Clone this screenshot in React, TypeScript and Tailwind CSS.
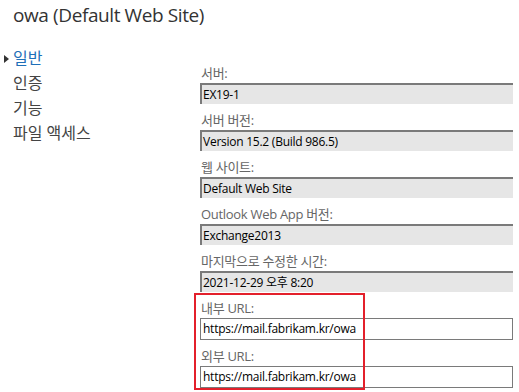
const font = "font-['Segoe_UI','Open_Sans','Noto_Sans_CJK_KR',sans-serif]"

interface Field {
  label: string
  value: string
  editable?: boolean
}

const fields: Field[] = [
  { label: '서버:', value: 'EX19-1' },
  { label: '서버 버전:', value: 'Version 15.2 (Build 986.5)' },
  { label: '웹 사이트:', value: 'Default Web Site' },
  { label: 'Outlook Web App 버전:', value: 'Exchange2013' },
  { label: '마지막으로 수정한 시간:', value: '2021-12-29 오후 8:20' },
]

const urlFields: Field[] = [
  { label: '내부 URL:', value: 'https://mail.fabrikam.kr/owa', editable: true },
  { label: '외부 URL:', value: 'https://mail.fabrikam.kr/owa', editable: true },
]

const navItems = ['일반', '인증', '기능', '파일 액세스']

function FieldRow({ field }: { field: Field }) {
  return (
    <div className="flex flex-col pb-[8px]">
      <label className="h-[16px] text-[13px] tracking-[-0.3px] leading-[16px] text-[#666666] pl-[1px] mb-[2px]">
        {field.label}
      </label>
      {field.editable ? (
        <div className="h-[22px] w-[313px] border border-[#7a7a7a] bg-white pl-[2px] text-[12px] tracking-[-0.25px] leading-[20px] text-black">
          {field.value}
        </div>
      ) : (
        <div className="h-[21px] w-[313px] border-t-2 border-l-2 border-[#7a7a7a] bg-[#e6e6e6] pl-[1px] text-[12px] tracking-[-0.25px] leading-[19px] text-black">
          {field.value}
        </div>
      )}
    </div>
  )
}

export default function App() {
  return (
    <div className={`w-[519px] h-[392px] overflow-hidden bg-white ${font}`}>
      {/* Title */}
      <h1 className="pl-[13px] pt-[1px] h-[47px] text-[19px] tracking-[-0.4px] leading-[28px] font-normal text-[#333333]">
        owa (Default Web Site)
      </h1>

      <div className="flex">
        {/* Left nav */}
        <nav className="w-[200px] flex flex-col pt-[1px]">
          {navItems.map((item, i) => (
            <div key={item} className="relative h-[25px] pl-[13px] text-[16px] leading-[20px]">
              {i === 0 && (
                <span className="absolute left-[4px] top-[7px] w-0 h-0 border-y-[4px] border-y-transparent border-l-[5px] border-l-[#333333]" />
              )}
              <span className={i === 0 ? 'text-[#1e6fb8]' : 'text-[#444444]'}>{item}</span>
            </div>
          ))}
        </nav>

        {/* Form */}
        <div className="flex flex-col pt-[18px]">
          {fields.map((f) => (
            <FieldRow key={f.label} field={f} />
          ))}
          <div className="relative">
            <div className="absolute left-[-6px] top-[-7px] w-[171px] h-[97px] border-2 border-[#e3202b] pointer-events-none" />
            {urlFields.map((f) => (
              <FieldRow key={f.label} field={f} />
            ))}
          </div>
        </div>
      </div>
    </div>
  )
}
